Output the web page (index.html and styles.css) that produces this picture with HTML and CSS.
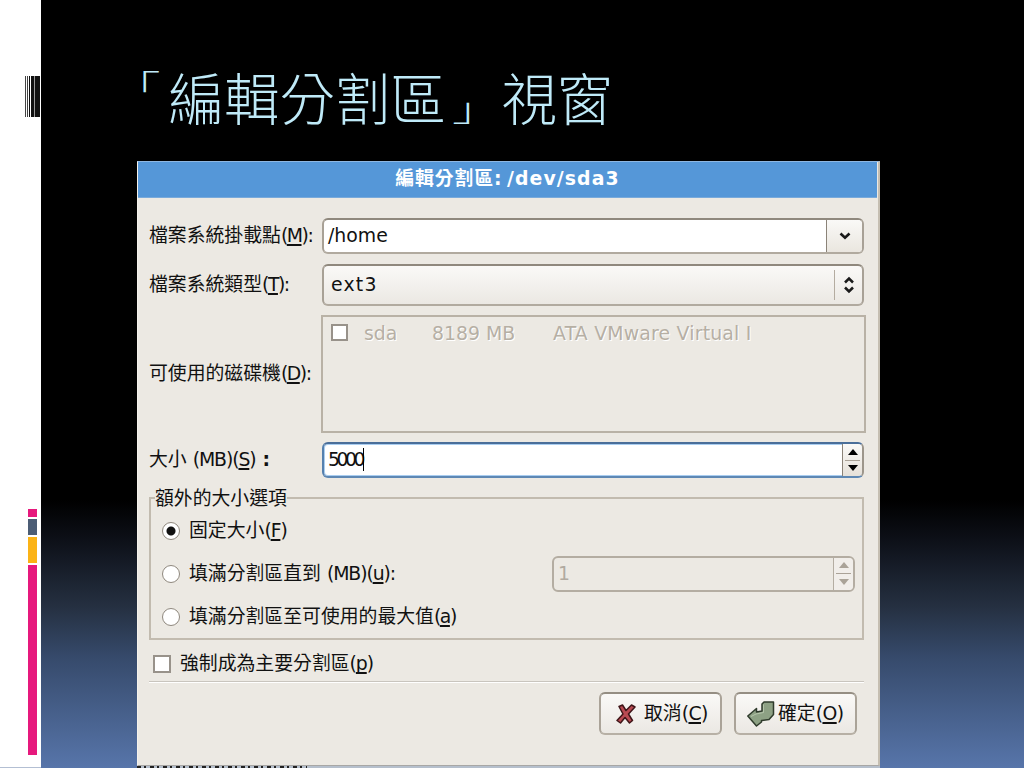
FILE: index.html
```
<!DOCTYPE html>
<html lang="zh-Hant">
<head>
  <meta charset="UTF-8" />
  <title>「編輯分割區」視窗</title>
  <meta name="viewport" content="width=device-width, initial-scale=1.0" />
  <link rel="stylesheet" href="styles.css">
</head>
<body>

  <aside class="rail">
    <svg class="barcode" width="17" height="41" viewBox="0 0 17 41">
      <path d="M1.500 0v41M3.500 0v41" stroke="#444" />
      <path d="M5 0h1v41h-1zM7 0h3v41h-3zM11 0h5v41h-5z" fill="#111" />
      <path d="M10.500 0v41" stroke="#999" />
    </svg>
    <div class="bars">
      <i class="bar pink-small"></i>
      <i class="bar slate"></i>
      <i class="bar yellow"></i>
      <i class="bar pink"></i>
    </div>
  </aside>

  <main class="slide">
    <h1><span class="open">「</span>編輯分割區<span class="close">」</span>視窗</h1>

    <div class="window">
      <div class="titlebar"><span>編輯分割區:</span> <b>/dev/sda3</b></div>

      <div class="content">
        <div class="row mount">
          <label>檔案系統掛載點<span class="key">(<u>M</u>):</span></label>
          <div class="field combo">
            <span class="value">/home</span>
            <span class="drop">
              <svg width="12" height="8" viewBox="0 0 12 8"><path d="M1.500 1.500 6 5.700l4.500-4.200" fill="none" stroke="#1a1a1a" stroke-width="2.600" /></svg>
            </span>
          </div>
        </div>

        <div class="row type">
          <label>檔案系統類型<span class="key">(<u>T</u>):</span></label>
          <div class="field select">
            <span class="value">ext3</span>
            <span class="updown">
              <svg width="10" height="18" viewBox="0 0 10 18"><path d="M1 6.500 5 2.500l4 4M1 11.500l4 4 4-4" fill="none" stroke="#1a1a1a" stroke-width="2.500" /></svg>
            </span>
          </div>
        </div>

        <div class="row drives">
          <label>可使用的磁碟機<span class="key">(<u>D</u>):</span></label>
          <div class="list">
            <span class="check"></span>
            <span class="name">sda</span>
            <span class="size">8189 MB</span>
            <span class="model">ATA VMware Virtual I</span>
          </div>
        </div>

        <div class="row amount">
          <label>大小 <span class="key wide">(MB)(<u>S</u>)</span><span class="colon">:</span></label>
          <div class="field spin focus">
            <span class="value">5000</span>
            <span class="arrows">
              <span><svg width="10" height="6" viewBox="0 0 10 6"><path d="M0 6 5 0l5 6z" /></svg></span>
              <span><svg width="10" height="6" viewBox="0 0 10 6"><path d="M0 0l5 6 5-6z" /></svg></span>
            </span>
          </div>
        </div>

        <div class="group">
          <span class="legend">額外的大小選項</span>
          <div class="option">
            <span class="radio on"></span>
            <span class="text">固定大小<span class="key wide">(<u>F</u>)</span></span>
          </div>
          <div class="option">
            <span class="radio"></span>
            <span class="text">填滿分割區直到 <span class="key wide">(MB)(<u>u</u>):</span></span>
            <div class="field spin disabled">
              <span class="value">1</span>
              <span class="arrows">
                <span><svg width="10" height="6" viewBox="0 0 10 6"><path d="M0 6 5 0l5 6z" /></svg></span>
                <span><svg width="10" height="6" viewBox="0 0 10 6"><path d="M0 0l5 6 5-6z" /></svg></span>
              </span>
            </div>
          </div>
          <div class="option">
            <span class="radio"></span>
            <span class="text">填滿分割區至可使用的最大值<span class="key">(<u>a</u>)</span></span>
          </div>
        </div>

        <div class="primary">
          <span class="check"></span>
          <span>強制成為主要分割區<span class="key wide">(<u>p</u>)</span></span>
        </div>

        <div class="actions">
          <div class="button cancel">
            <svg width="20" height="22" viewBox="0 0 20 22"><path d="M3 3.500 6.500 2 10 7.500 15.500 2 19 4l-6.500 7 4 6.500-3 2.500-4.500-5.500L4.500 20 1 17.500 7 11z" fill="#b94a52" stroke="#3f1518" stroke-width="1.500" stroke-linejoin="round" /></svg>
            <span>取消<span class="key">(<u>C</u>)</span></span>
          </div>
          <div class="button ok">
            <svg width="28" height="28" viewBox="0 0 28 28"><path d="M15 4 17 2H26.500V14.500L22 19.500 14.500 20.500V22L9.500 26 .800 16 9.500 8.500V12L15 11z" fill="#8da184" stroke="#2f3b2c" stroke-width="1.500" stroke-linejoin="round" /><path d="M16.500 4.500V12.500L9 14 4 16.500" fill="none" stroke="#b4c4aa" /></svg>
            <span>確定<span class="key">(<u>O</u>)</span></span>
          </div>
        </div>
      </div>
    </div>
    <div class="behind"></div>
  </main>

</body>
</html>
```
FILE: styles.css
```
* {
  margin: 0;
  padding: 0;
  box-sizing: border-box;
}

body {
  width: 1024px;
  height: 768px;
  overflow: hidden;
  display: flex;
  font-family: "DejaVu Sans", "Noto Sans CJK TC", sans-serif;
  font-size: 18.85px;
  color: #111;
}

svg {
  display: block;
}

/* left rail */
.rail {
  width: 41px;
  height: 768px;
  background: #fff;
  border-bottom: 1px solid #b3bfd3;
  padding: 76px 0 0 24px;
}

.bars {
  margin: 392px 0 0 4px;
  width: 9px;
  display: flex;
  flex-direction: column;
  gap: 2px;
}

.bar {
  background: #e6197d;
}

.pink-small {
  height: 8px;
}

.slate {
  height: 16px;
  background: #4c5d75;
}

.yellow {
  height: 26px;
  background: #fbb316;
}

.pink {
  height: 190px;
}

/* slide */
.slide {
  width: 983px;
  height: 768px;
  padding-left: 96px;
  background: linear-gradient(#000 0, #000 500px, #0d1018 540px, #253041 607px, #364a6b 657px, #5775aa 768px);
}

h1 {
  height: 161px;
  padding-top: 58px;
  margin-left: -24px;
  font-family: "Noto Sans CJK TC", sans-serif;
  font-size: 55.5px;
  line-height: 76px;
  font-weight: 300;
  color: #bfeaf8;
  white-space: nowrap;
}

/* corner brackets are short and wide */
.open,
.close {
  display: inline-block;
  width: 32px;
  font-size: 32px;
  line-height: 32px;
  transform: scaleX(1.55);
  transform-origin: 0 0;
}

.open {
  margin: 0 25.5px 0 -2px;
  vertical-align: 22px;
}

.close {
  margin: 0 17.5px 0 6px;
  vertical-align: -1px;
}

.window {
  width: 743px;
  height: 605px;
  background: #ece9e3;
  border: 1px solid #f5f2eb;
  border-top-color: #8eb7e2;
  border-right: 2px solid #c5beb1;
  border-bottom-color: #a8a7a5;
}

.titlebar {
  width: 739px;
  height: 36px;
  background: #5597d8;
  color: #fff;
  font-weight: 700;
  line-height: 34px;
  text-align: center;
  white-space: pre;
  border-bottom: 1px solid #79aadb;
}

.titlebar span {
  letter-spacing: 0.9px;
}

.titlebar b {
  margin-left: -2px;
  letter-spacing: 1.1px;
}

.content {
  padding: 20px 0 0 11px;
}

.row {
  display: flex;
  align-items: center;
}

.row label {
  width: 173px;
  flex: none;
  padding-bottom: 5px;
  white-space: nowrap;
}

.key {
  letter-spacing: -1.5px;
}

.wide {
  letter-spacing: -1.1px;
}

.colon {
  margin-left: 7px;
  font-weight: 700;
}

u {
  text-underline-offset: 2px;
  text-decoration-thickness: 1.5px;
  text-decoration-skip-ink: none;
}

.field {
  width: 542px;
  height: 36px;
  display: flex;
  align-items: center;
  border: 2px solid #a8a196;
  border-color: #8f887d #a8a196 #b1aa9f;
  border-radius: 6px;
  background: #fff;
  overflow: hidden;
}

.field .value {
  flex: 1;
  padding: 0 0 2px 4px;
}

.drop {
  width: 36px;
  height: 100%;
  display: flex;
  align-items: center;
  justify-content: center;
  border-left: 1px solid #8b8378;
  background: linear-gradient(#faf9f7, #eae6df);
}

.type {
  margin-top: 10px;
}

.select {
  height: 42px;
  background: linear-gradient(#faf9f7, #ebe8e3);
}

.select .value {
  padding-left: 7px;
  letter-spacing: 1.2px;
}

.updown {
  height: 30px;
  width: 28px;
  display: flex;
  align-items: center;
  justify-content: center;
  border-left: 1px solid #b4aca0;
}

.drives {
  margin-top: 9px;
}

.drives label {
  width: 172px;
}

.list {
  width: 545px;
  height: 118px;
  border: 2px solid #b9b2a6;
  padding: 5px 0 0 8px;
  display: flex;
  align-items: flex-start;
  line-height: 23px;
  color: #b6afa4;
  text-shadow: 1px 1px #fff;
  white-space: nowrap;
}

.check {
  width: 17px;
  height: 17px;
  margin-top: 2px;
  border: 2px solid #98928a;
  background: #fff;
}

.name {
  width: 68px;
  margin-left: 16px;
}

.size {
  width: 121px;
}

.model {
  letter-spacing: 0.2px;
}

.amount {
  margin-top: 9px;
}

.focus {
  border-color: #4a6e99 #9d968b #5e88b4 #5580ae;
  box-shadow: inset 0 0 0 1px #a9cdf0;
}

.focus .value {
  letter-spacing: -3.5px;
}

/* text cursor */
.focus .value::after {
  content: "";
  display: inline-block;
  width: 1px;
  height: 23px;
  margin-left: 1px;
  vertical-align: -5px;
  background: #000;
}

.arrows {
  width: 20px;
  height: 100%;
  display: flex;
  flex-direction: column;
  border-left: 1px solid #8b8378;
  background: linear-gradient(#faf9f7, #e6e1d9);
}

.arrows span {
  flex: 1;
  margin: 0 2px;
  display: flex;
  align-items: center;
  justify-content: center;
}

.arrows span + span {
  border-top: 1px solid #aaa297;
}

.group {
  position: relative;
  width: 715px;
  height: 143px;
  margin-top: 19px;
  padding: 12px 7px 0 11px;
  border: 2px solid #c2bbaf;
}

.legend {
  position: absolute;
  top: -13px;
  left: 4px;
  line-height: 26px;
  background: #ece9e3;
}

.option {
  height: 43px;
  display: flex;
  align-items: center;
  white-space: nowrap;
}

.option .text {
  padding-bottom: 4px;
}

.group .option:nth-child(2) {
  margin-top: -2px;
}

.radio {
  width: 18px;
  height: 18px;
  margin-right: 9px;
  flex: none;
  border: 1.5px solid #8f887e;
  border-radius: 50%;
  background: #fff;
}

.radio.on {
  background: radial-gradient(circle, #111 0, #111 4px, #fff 5px);
}

.option .field {
  width: 303px;
  margin-left: auto;
}

.disabled,
.disabled .arrows {
  border-color: #b4ada2;
  background: #ece9e3;
  color: #b1aaa0;
}

.disabled .value {
  padding-bottom: 0;
}

.disabled .arrows {
  background: #f1eeea;
}

.disabled svg {
  fill: #aaa398;
}

.primary {
  height: 41px;
  padding: 2px 0 0 4px;
  display: flex;
  align-items: center;
  gap: 9px;
}

.primary .check {
  width: 18px;
  height: 18px;
  margin-top: 4px;
}

.actions {
  width: 715px;
  padding: 10px 7px 0 0;
  border-top: 1px solid #c9c5be;
  box-shadow: inset 0 1px #fff;
  display: flex;
  justify-content: flex-end;
  gap: 12px;
}

.button {
  width: 123px;
  height: 43px;
  display: flex;
  align-items: center;
  border: 2px solid #a8a196;
  border-color: #958e83 #aaa398 #b7b0a5;
  border-radius: 6px;
  background: linear-gradient(#faf9f7, #ebe8e3);
  white-space: nowrap;
}

.button > span {
  padding-bottom: 5px;
}

.button .key {
  letter-spacing: -0.6px;
}

.cancel {
  padding-left: 15px;
  gap: 8px;
}

.ok {
  padding-left: 11px;
  gap: 3px;
}

/* sliver of the window underneath */
.behind {
  width: 743px;
  height: 2px;
  background: repeating-linear-gradient(90deg, #222 0 4px, #b5bfcc 4px 7px, #222 7px 9px, #b5bfcc 9px 13px) 0 0 / 170px 2px no-repeat, #b5bfcc;
}
```
